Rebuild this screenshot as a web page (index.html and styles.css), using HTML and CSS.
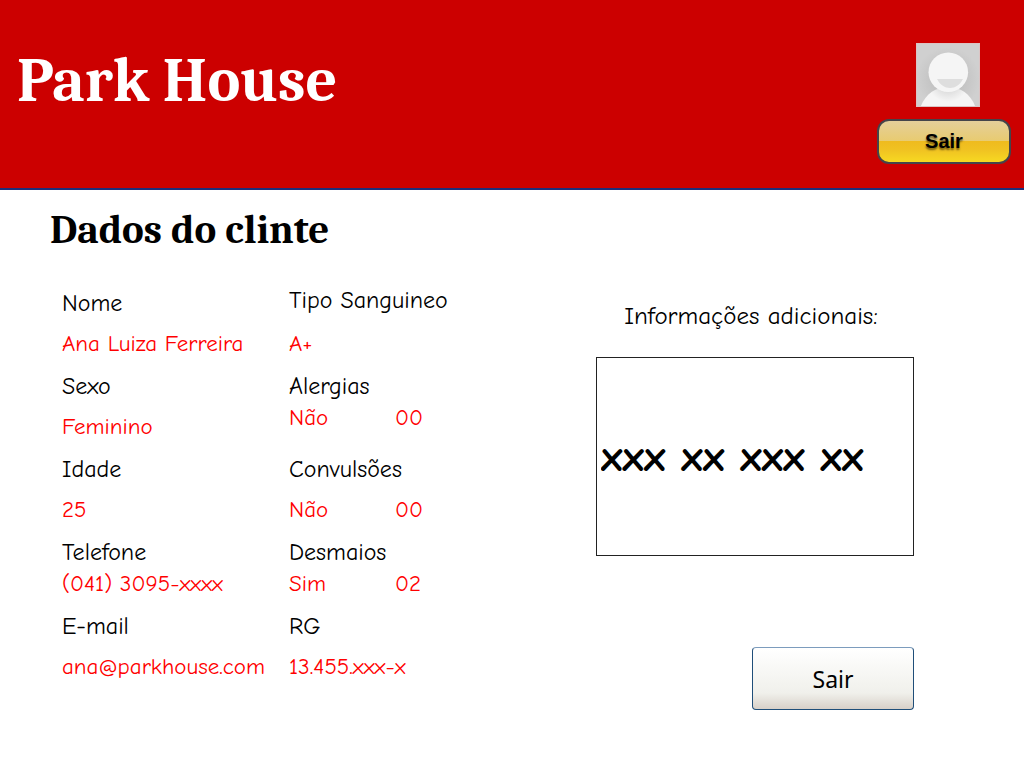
FILE: index.html
```html
<!DOCTYPE html>
<html lang="pt-BR">
<head>
<meta charset="utf-8">
<title>Park House - Dados do clinte</title>
<link rel="stylesheet" href="styles.css">
</head>
<body>
<header class="header">
  <h1 class="brand">Park House</h1>
  <div class="account">
    <svg class="avatar" viewBox="0 0 64 64" role="img" aria-label="Avatar">
      <defs>
        <radialGradient id="shade" cx="32" cy="36" r="32" gradientUnits="userSpaceOnUse">
          <stop offset="0" stop-color="#b4b4b4"/>
          <stop offset="0.6" stop-color="#c6c6c6"/>
          <stop offset="1" stop-color="#d0d0d0"/>
        </radialGradient>
        <radialGradient id="body" cx="32" cy="38" r="26" gradientUnits="userSpaceOnUse">
          <stop offset="0.4" stop-color="#dedede"/>
          <stop offset="0.8" stop-color="#f5f5f5"/>
        </radialGradient>
      </defs>
      <rect width="64" height="64" fill="url(#shade)"/>
      <path d="M4.500 64C10 50 20 44 32 44S54 50 59.500 64Z" fill="url(#body)"/>
      <circle cx="32.300" cy="29.200" r="19.800" fill="#f5f5f5"/>
      <path d="M21 36H47C44 42 39 45 34 45S24 42 21 36Z" fill="#dedede"/>
      <rect x="0.500" y="0.500" width="63" height="63" fill="none" stroke="#dcc4c4"/>
    </svg>
    <button class="logout" type="button">Sair</button>
  </div>
</header>
<main class="content">
  <h2 class="title">Dados do clinte</h2>
  <div class="columns">
    <dl class="fields">
      <div class="field field-end"><dt>Nome</dt><dd>Ana Luiza Ferreira</dd></div>
      <div class="field field-loose"><dt>Tipo Sanguineo</dt><dd>A+</dd></div>
      <div class="field"><dt>Sexo</dt><dd>Feminino</dd></div>
      <div class="field field-tight"><dt>Alergias</dt><dd><span class="answer">Não</span><span>00</span></dd></div>
      <div class="field"><dt>Idade</dt><dd>25</dd></div>
      <div class="field"><dt>Convulsões</dt><dd><span class="answer">Não</span><span>00</span></dd></div>
      <div class="field field-tight"><dt>Telefone</dt><dd>(041) 3095-xxxx</dd></div>
      <div class="field field-tight"><dt>Desmaios</dt><dd><span class="answer">Sim</span><span>02</span></dd></div>
      <div class="field"><dt>E-mail</dt><dd>ana@parkhouse.com</dd></div>
      <div class="field"><dt>RG</dt><dd>13.455.xxx-x</dd></div>
    </dl>
    <section class="extra">
      <label class="extra-label" for="info">Informações adicionais:</label>
      <input class="extra-box" id="info" type="text" value="xxx xx xxx xx">
      <button class="exit" type="button">Sair</button>
    </section>
  </div>
</main>
</body>
</html>
```
FILE: styles.css
```css
* { box-sizing: border-box; }

body {
  margin: 0;
  background: #fff;
  color: #000;
  font-family: "Comic Sans MS", "Comic Neue", "Noto Sans", sans-serif;
}

.header {
  display: flex;
  justify-content: space-between;
  align-items: flex-start;
  padding: 43px 13px 24px 17px;
  background: #c00;
  border-bottom: 2px solid #1c2f7c;
}

.brand,
.title {
  margin: 0;
  font-family: Cambria, "Liberation Serif", serif;
  font-weight: 700;
}

.brand {
  color: #fff;
  font-size: 62px;
  line-height: 76px;
}

.account {
  display: flex;
  flex-direction: column;
  align-items: center;
  gap: 12px;
}

.avatar {
  width: 64px;
  height: 64px;
  margin-left: 8px;
}

.logout {
  width: 134px;
  height: 45px;
  padding: 0;
  border: 2px solid #45444a;
  border-radius: 12px;
  background: linear-gradient(#e5cf9a 0%, #e8cb70 49%, #efbb1e 50%, #f0c222 70%, #f7d922 100%);
  color: #000;
  font: 700 20px "Liberation Sans", Arial, sans-serif;
  text-shadow: 0 2px 2px rgba(0, 0, 0, 0.5);
}

.content { padding: 14px 50px 32px; }

.title {
  font-size: 41px;
  line-height: 52px;
}

.columns {
  display: flex;
  justify-content: space-between;
  align-items: flex-start;
  padding: 28px 60px 0 12px;
}

.fields {
  display: grid;
  grid-template-columns: 227px auto;
  row-gap: 10px;
  margin: 0;
  font-size: 24px;
  line-height: 32px;
  white-space: nowrap;
}

.field {
  display: flex;
  flex-direction: column;
  gap: 9px;
}

.field-tight { gap: 0; }
.field-loose { gap: 12px; }
.field-end { justify-content: flex-end; }

.field dd {
  display: flex;
  margin: 0;
  color: #f00;
  font-size: 23px;
}

.answer { width: 106px; }

.extra {
  display: flex;
  flex-direction: column;
  width: 318px;
  padding-top: 16px;
}

.extra-label {
  margin-bottom: 25px;
  padding-right: 8px;
  font-size: 25px;
  line-height: 32px;
  text-align: center;
}

.extra-box {
  width: 100%;
  height: 199px;
  padding: 0 4px;
  border: 1px solid #222;
  border-radius: 0;
  background: #fff;
  color: #000;
  font: 700 44px "Comic Sans MS", "Comic Neue", "Noto Sans", sans-serif;
}

.exit {
  align-self: flex-end;
  width: 162px;
  height: 63px;
  margin-top: 91px;
  padding: 0;
  border: 1px solid #1f4e79;
  border-top-color: #7c9cbd;
  border-radius: 4px;
  background: linear-gradient(#fff 0%, #f0f0eb 74%, #d8d0c8 100%);
  color: #000;
  font: 23px "Noto Sans", sans-serif;
}
```
